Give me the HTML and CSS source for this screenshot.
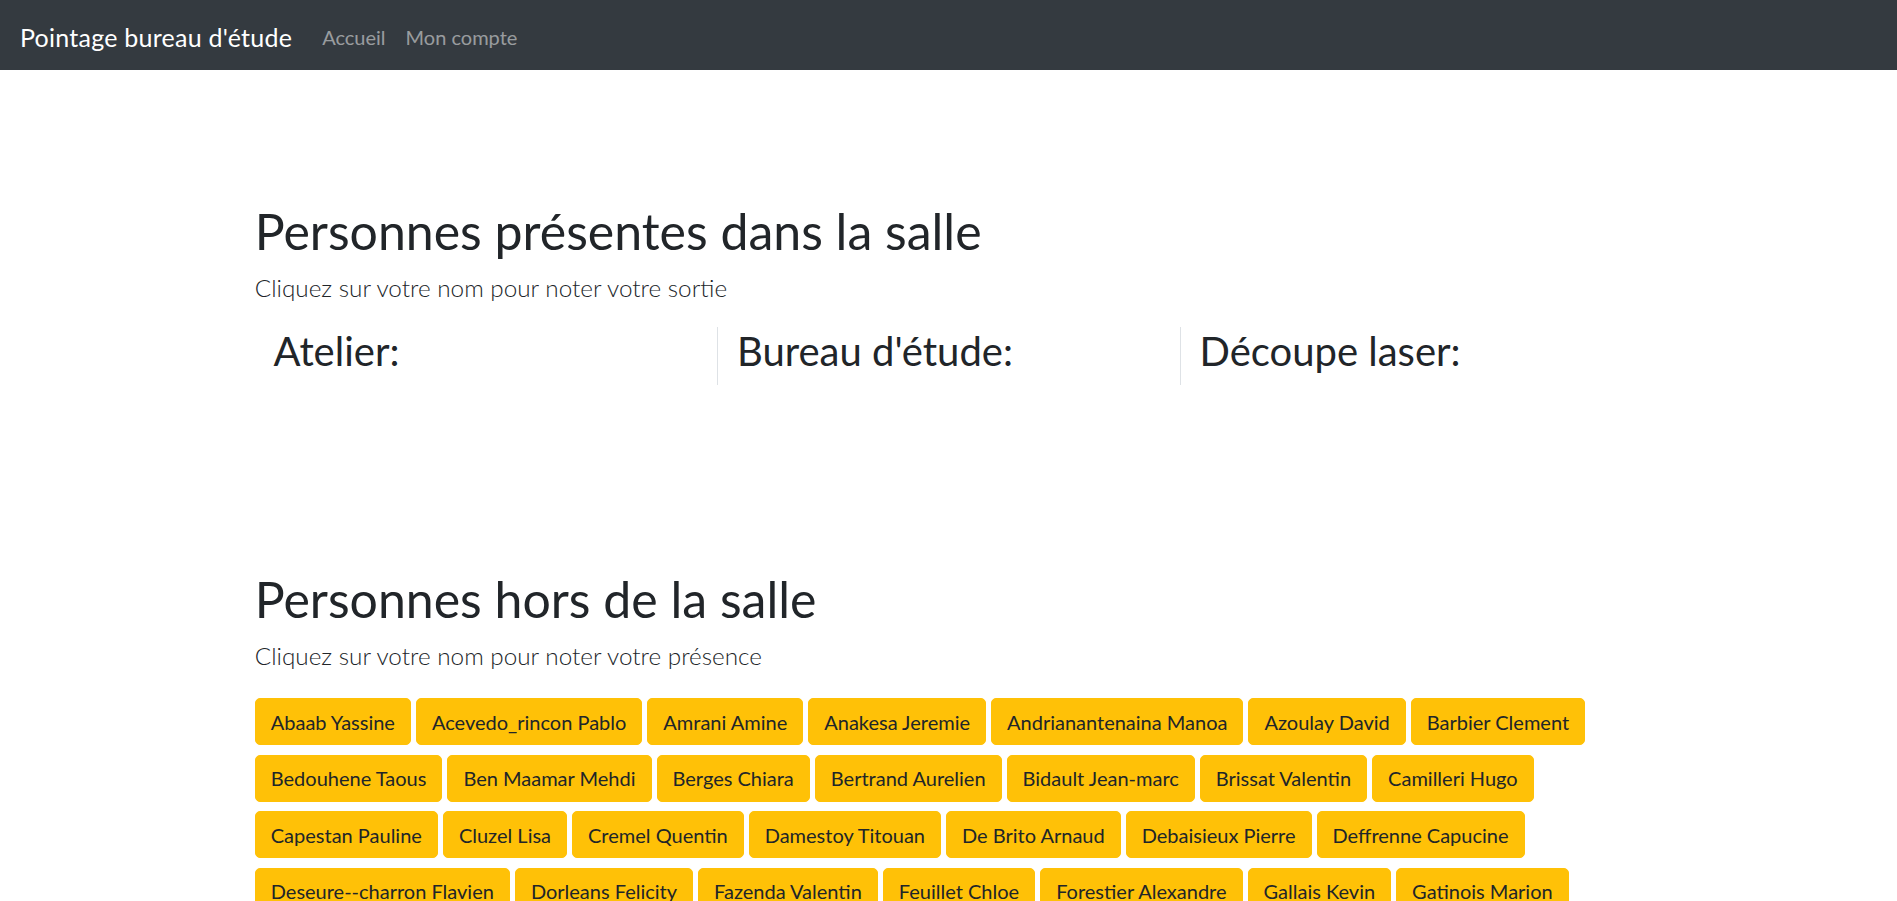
FILE: index.html
```html
<!DOCTYPE html>
<html lang="fr">
<head>
<meta charset="utf-8">
<title>Pointage bureau d'étude</title>
<link rel="stylesheet" href="styles.css">
</head>
<body>
<nav class="navbar">
  <a class="brand" href="#">Pointage bureau d'étude</a>
  <ul class="nav-links">
    <li><a class="nav-link" href="#">Accueil</a></li>
    <li><a class="nav-link" href="#">Mon compte</a></li>
  </ul>
</nav>

<main class="container">
  <section class="section section-present">
    <h1 class="title">Personnes présentes dans la salle</h1>
    <p class="lead">Cliquez sur votre nom pour noter votre sortie</p>
    <div class="rooms">
      <div class="room"><h2 class="room-title">Atelier:</h2></div>
      <div class="room"><h2 class="room-title">Bureau d'étude:</h2></div>
      <div class="room"><h2 class="room-title">Découpe laser:</h2></div>
    </div>
  </section>

  <section class="section section-absent">
    <h1 class="title">Personnes hors de la salle</h1>
    <p class="lead">Cliquez sur votre nom pour noter votre présence</p>
    <div class="people">
      <button class="btn">Abaab Yassine</button>
      <button class="btn">Acevedo_rincon Pablo</button>
      <button class="btn">Amrani Amine</button>
      <button class="btn">Anakesa Jeremie</button>
      <button class="btn">Andrianantenaina Manoa</button>
      <button class="btn">Azoulay David</button>
      <button class="btn">Barbier Clement</button>
      <button class="btn">Bedouhene Taous</button>
      <button class="btn">Ben Maamar Mehdi</button>
      <button class="btn">Berges Chiara</button>
      <button class="btn">Bertrand Aurelien</button>
      <button class="btn">Bidault Jean-marc</button>
      <button class="btn">Brissat Valentin</button>
      <button class="btn">Camilleri Hugo</button>
      <button class="btn">Capestan Pauline</button>
      <button class="btn">Cluzel Lisa</button>
      <button class="btn">Cremel Quentin</button>
      <button class="btn">Damestoy Titouan</button>
      <button class="btn">De Brito Arnaud</button>
      <button class="btn">Debaisieux Pierre</button>
      <button class="btn">Deffrenne Capucine</button>
      <button class="btn">Deseure--charron Flavien</button>
      <button class="btn">Dorleans Felicity</button>
      <button class="btn">Fazenda Valentin</button>
      <button class="btn">Feuillet Chloe</button>
      <button class="btn">Forestier Alexandre</button>
      <button class="btn">Gallais Kevin</button>
      <button class="btn">Gatinois Marion</button>
    </div>
  </section>
</main>
</body>
</html>
```
FILE: styles.css
```css
html, body {
  margin: 0;
  padding: 0;
}
body {
  font-family: Lato, "Open Sans", sans-serif;
  font-size: 20px;
  line-height: 1.5;
  color: #212529;
  background: #fff;
}

.navbar {
  display: flex;
  align-items: center;
  height: 70px;
  box-sizing: border-box;
  padding: 10px 20px;
  background: #343a40;
}
.brand {
  font-size: 25px;
  line-height: 37.5px;
  padding: 8.5px 0 4px;
  margin-right: 20px;
  letter-spacing: 0.25px;
  color: #fff;
  text-decoration: none;
  white-space: nowrap;
}
.nav-links {
  display: flex;
  list-style: none;
  margin: 0;
  padding: 0;
}
.nav-link {
  display: block;
  padding: 12px 10px 8px;
  font-size: 20px;
  line-height: 30px;
  color: rgba(255, 255, 255, 0.5);
  text-decoration: none;
}

.container {
  max-width: 1425px;
  margin: 0 auto;
  padding: 0 18.75px;
  box-sizing: border-box;
}

.section-present {
  padding-top: 130.6px;
}
.section-absent {
  padding-top: 183.6px;
}

.title {
  margin: 0 0 8px;
  font-size: 50px;
  line-height: 1.2;
  font-weight: 400;
}
.lead {
  margin: 0 0 21px;
  font-size: 24.3px;
  line-height: 37.5px;
  font-weight: 300;
}
.section-absent .lead {
  margin-bottom: 24px;
}

.rooms {
  display: grid;
  grid-template-columns: repeat(3, 1fr);
}
.room {
  padding: 0 18.75px;
}
.room + .room {
  border-left: 1px solid #dee2e6;
}
.room-title {
  margin: 0 0 10px;
  font-size: 40px;
  line-height: 1.2;
  font-weight: 400;
}

.people {
  display: flex;
  flex-wrap: wrap;
  gap: 9.5px 5px;
}
.btn {
  font-family: inherit;
  font-size: 20px;
  line-height: 30px;
  padding: 7.5px 15px;
  border: 1.25px solid #ffc107;
  border-radius: 5px;
  background: #ffc107;
  color: #212529;
  cursor: pointer;
  white-space: nowrap;
}
```
